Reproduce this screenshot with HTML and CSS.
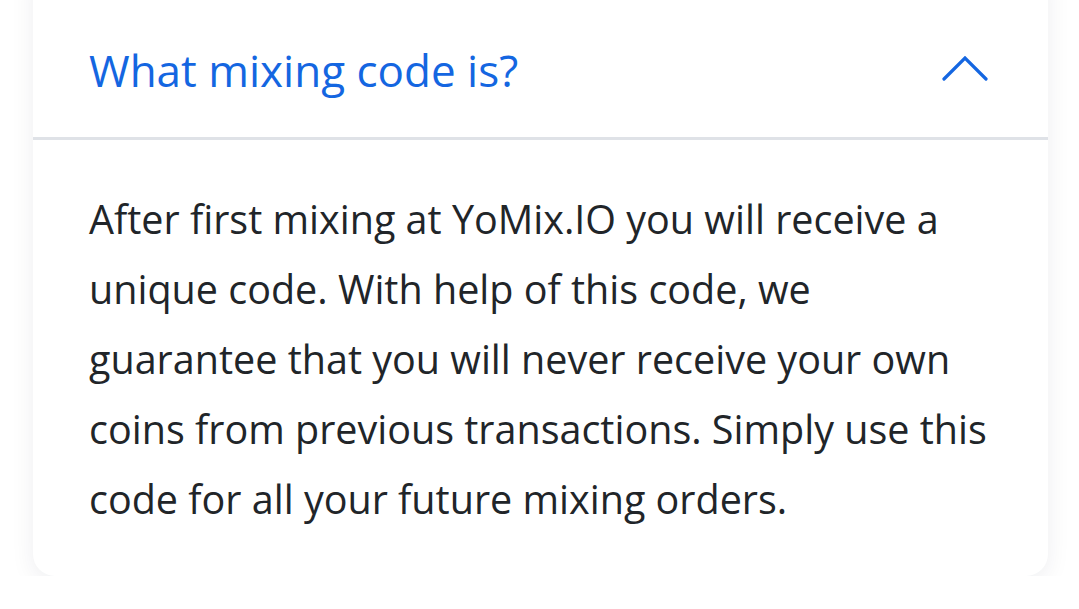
FILE: index.html
```html
<!DOCTYPE html>
<html>
<head>
    <meta charset="UTF-8" />
    <meta name="viewport" content="width=device-width, initial-scale=1.0" />
    <title>FAQ</title>
    <link rel="stylesheet" href="styles.css">
</head>
<body>
    <div class="faq-item">
        <div class="faq-head">
            <span class="faq-title">What mixing code is?</span>
            <svg class="faq-chevron" width="46" height="26" viewBox="0 0 46 26">
                <polyline points="2,23 23,2 44,23" fill="none" stroke="#1466e1" stroke-width="3.2" stroke-linecap="round" stroke-linejoin="miter"/>
            </svg>
        </div>
        <div class="faq-body">
            After first mixing at YoMix.IO you will receive a unique code. With help of this code, we guarantee that you will never receive your own coins from previous transactions. Simply use this code for all your future mixing orders.
        </div>
    </div>
</body>
</html>
```

FILE: styles.css
```css
body { margin: 0; background: #fff; font-family: "Open Sans", sans-serif; overflow: hidden; }

.faq-item {
    margin: -30px 31px 0 33px;
    background: #fff;
    border-radius: 0 0 22px 22px;
    box-shadow: 0 6px 24px rgba(20, 30, 60, 0.07);
}

.faq-head {
    display: flex;
    align-items: center;
    justify-content: space-between;
    height: 137px;
    padding: 30px 60px 0 56px;
    border-bottom: 3px solid #dfe2e7;
}
.faq-title {
    color: #1466e1;
    font-size: 44px;
    margin-top: 2px;
}
.faq-chevron { display: block; }

.faq-body {
    padding: 44px 56px 42px 56px;
    color: #212529;
    font-size: 39.5px;
    line-height: 70px;
}
```
